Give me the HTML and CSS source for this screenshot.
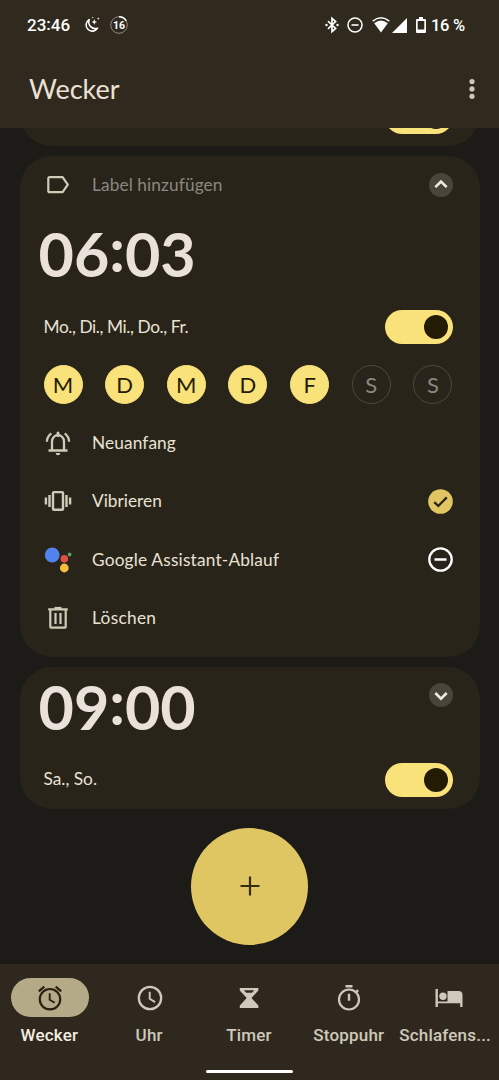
FILE: index.html
```
<!DOCTYPE html>
<html lang="de">
<head>
<meta charset="utf-8">
<title>Wecker</title>
<link rel="stylesheet" href="styles.css">
</head>
<body>
<div class="screen">
  <header class="top">
    <div class="status">
      <span class="clock">23<span class="clock-colon">:</span>46</span>
      <svg class="moon" width="18" height="18" viewBox="0 0 18 18"><path d="M6.200 3.600A6.200 6.200 0 1 0 14.600 12.200A6.600 6.600 0 0 1 6.200 3.600Z" fill="none" stroke="#fff" stroke-width="1.600" stroke-linejoin="round"/><path d="M11.300 3.200l.8 2 2 .8-2 .8-.8 2-.8-2-2-.8 2-.8zM15.200 1.300l.4 1 1 .4-1 .4-.4 1-.4-1-1-.4 1-.4zM9.800.4l.3.800.8.3-.8.3-.3.800-.3-.8-.8-.3.800-.3z" fill="#fff"/></svg>
      <svg class="ring" width="20" height="20" viewBox="0 0 20 20"><circle cx="10" cy="10" r="8.300" fill="none" stroke="#8d8982" stroke-width="1"/><path d="M10 1.700A8.300 8.300 0 0 1 17.200 5.800" fill="none" stroke="#fff" stroke-width="1.600"/><text x="10" y="13.900" class="ring-text">16</text></svg>
      <span class="spacer"></span>
      <svg class="bt" width="14" height="18" viewBox="0 0 14 18"><path d="M3 5.200L10.600 12.400L7 15.600V2.400L10.600 5.600L3 12.800" fill="none" stroke="#fff" stroke-width="1.700"/><circle cx="1.500" cy="9" r="1.200" fill="#fff"/><circle cx="12.500" cy="9" r="1.200" fill="#fff"/></svg>
      <svg class="dnd" width="16" height="16" viewBox="0 0 16 16"><circle cx="8" cy="8" r="7" fill="none" stroke="#fff" stroke-width="1.500"/><path d="M4.500 8h7" stroke="#fff" stroke-width="1.600"/></svg>
      <svg class="wifi" width="18" height="16" viewBox="0 0 18 16"><path d="M.7 4.200Q9-2.500 17.300 4.200" fill="none" stroke="#fff" stroke-width="1.500"/><path d="M2.200 6.200Q9 .8 15.800 6.200L9 15.600z" fill="#fff"/></svg>
      <svg class="signal" width="15" height="15" viewBox="0 0 15 15"><path d="M15 0v15H0z" fill="#fff"/></svg>
      <svg class="battery" width="10" height="16" viewBox="0 0 10 16"><path d="M3 0h4v2h2a1 1 0 0 1 1 1v12a1 1 0 0 1-1 1H1a1 1 0 0 1-1-1V3a1 1 0 0 1 1-1h2zM1.700 4v8.500h6.600V4z" fill="#fff" fill-rule="evenodd"/></svg>
      <span class="percent">16 %</span>
    </div>
    <div class="appbar">
      <h1 class="title">Wecker</h1>
      <svg width="6" height="22" viewBox="0 0 6 22" fill="#d0c8ba"><circle cx="3" cy="3.500" r="2.600"/><circle cx="3" cy="10.900" r="2.600"/><circle cx="3" cy="18.300" r="2.600"/></svg>
    </div>
  </header>

  <main class="list">
    <div class="clipped">
      <section class="card card-small"><div class="schedule"><span></span><span class="toggle"><i class="knob"></i></span></div></section>
    </div>

    <section class="card card-open">
      <div class="row">
        <span class="icon"><svg width="24" height="20" viewBox="0 0 24 20"><path d="M3.500 2.200H16.600L21.800 9.700L16.600 17.200H3.500a1.200 1.200 0 0 1-1.200-1.200V3.400A1.200 1.200 0 0 1 3.500 2.200Z" fill="none" stroke="#d0cbb7" stroke-width="2.200" stroke-linejoin="round"/></svg></span>
        <span class="label hint">Label hinzufügen</span>
        <span class="chevron"><svg width="24" height="24" viewBox="0 0 24 24"><path d="M6.300 14.200L12 8.500l5.700 5.700" class="chevron-line"/></svg></span>
      </div>
      <div class="time">06<span class="colon">:</span>03</div>
      <div class="schedule"><span class="days-text weekdays">Mo., Di., Mi., Do., Fr.</span><span class="toggle"><i class="knob"></i></span></div>
      <div class="days">
        <span class="day on">M</span><span class="day on">D</span><span class="day on">M</span><span class="day on">D</span><span class="day on">F</span><span class="day">S</span><span class="day">S</span>
      </div>
      <div class="row">
        <span class="icon"><svg width="28" height="28" viewBox="0 0 28 28" fill="none" stroke="#d0cbb7" stroke-width="2.300"><path d="M4.500 21.500h19M8 21.500V12.500a6 6.300 0 0 1 12 0v9"/><path d="M14 4v2.500" stroke-width="3" stroke-linecap="round"/><path d="M2.900 12.800C3 9 4.800 6.200 7.300 4.300M25.100 12.800C25 9 23.200 6.200 20.700 4.300"/><path d="M11.700 24h4.600a2.300 2.300 0 0 1-4.600 0z" fill="#d0cbb7" stroke="none"/></svg></span>
        <span class="label neu">Neuanfang</span>
      </div>
      <div class="row">
        <span class="icon"><svg width="28" height="24" viewBox="0 0 28 24" fill="none" stroke="#d0cbb7" stroke-width="2.400"><rect x="9" y="3.100" width="10" height="17.600" rx="1"/><path d="M5.500 6v12M22.500 6v12M1.900 8.500v7M26.100 8.500v7"/></svg></span>
        <span class="label vib">Vibrieren</span>
        <svg width="25" height="25" viewBox="0 0 25 25"><circle cx="12.500" cy="12.500" r="12.300" fill="#e0c662"/><path d="M6.300 13.200L10.300 17L18.800 8.400" fill="none" stroke="#28241a" stroke-width="2.300"/></svg>
      </div>
      <div class="row">
        <span class="icon"><svg width="28" height="26" viewBox="0 0 28 26"><circle cx="8.200" cy="8" r="7.400" fill="#5083ec"/><circle cx="20.300" cy="11.800" r="3.800" fill="#dc5143"/><circle cx="20.300" cy="21" r="4.400" fill="#f4bd40"/><circle cx="25.600" cy="7.500" r="1.900" fill="#58a55c"/></svg></span>
        <span class="label assist">Google Assistant-Ablauf</span>
        <svg width="25" height="25" viewBox="0 0 25 25" fill="none" stroke="#fff"><circle cx="12.500" cy="12.500" r="11.200" stroke-width="2.300"/><path d="M6.500 12.500h12" stroke-width="2.500"/></svg>
      </div>
      <div class="row">
        <span class="icon"><svg width="22" height="24" viewBox="0 0 22 24" fill="none" stroke="#d0cbb7" stroke-width="2.200"><path d="M3.300 3.500V20.200a1.500 1.500 0 0 0 1.500 1.500H17.200a1.500 1.500 0 0 0 1.500-1.500V3.500M1.200 3.400H20.800M8.500 7v11M13.500 7v11"/><path d="M7.500 2h7"/></svg></span>
        <span class="label del">Löschen</span>
      </div>
    </section>

    <section class="card card-small">
      <div class="small-head">
        <div class="time">09<span class="colon">:</span>00</div>
        <span class="chevron"><svg width="24" height="24" viewBox="0 0 24 24"><path d="M6.300 10L12 15.700l5.700-5.700" class="chevron-line"/></svg></span>
      </div>
      <div class="schedule"><span class="days-text weekend">Sa., So.</span><span class="toggle"><i class="knob"></i></span></div>
    </section>

    <button class="fab" aria-label="Wecker hinzufügen"><svg width="20" height="20" viewBox="0 0 20 20"><path d="M10 .5v19M.5 10h19" stroke="#352d12" stroke-width="2.200"/></svg></button>
  </main>

  <nav class="nav">
    <div class="tab active"><span class="pill"><svg width="26" height="26" viewBox="0 0 26 26" fill="none" stroke="#272110" stroke-width="2.200"><circle cx="13" cy="14.200" r="10.200"/><path d="M12.700 8.200v6.600l5 3" stroke-width="1.900"/><path d="M1.800 6.300L7.300 1.700M24.200 6.300L18.700 1.700" stroke-width="2.300"/></svg></span><span class="tab-text">Wecker</span></div>
    <div class="tab"><span class="pill"><svg width="26" height="26" viewBox="0 0 26 26" fill="none" stroke="#d0c8ba" stroke-width="2.300"><circle cx="13" cy="13" r="11.200"/><path d="M12.700 6.800v7l5.400 3.300" stroke-width="1.900"/></svg></span><span class="tab-text">Uhr</span></div>
    <div class="tab"><span class="pill"><svg width="20" height="20" viewBox="0 0 20 20"><path d="M.8 0h18.600v2.500L12.500 10l6.900 7.500V20H.8v-2.500L7.700 10 .8 2.500zM5 2.200L7.200 4.800h5.800l2.200-2.600z" fill="#d0c8ba" fill-rule="evenodd"/></svg></span><span class="tab-text">Timer</span></div>
    <div class="tab"><span class="pill"><svg width="26" height="28" viewBox="0 0 26 28" fill="none" stroke="#d0c8ba" stroke-width="2.200"><circle cx="13" cy="15.500" r="10"/><path d="M9.500 2.200h7M13 9.700v7" stroke-width="2.400"/><path d="M19.500 8.800l2.600-2.600" stroke-width="2.400"/></svg></span><span class="tab-text">Stoppuhr</span></div>
    <div class="tab"><span class="pill"><svg width="28" height="20" viewBox="0 0 28 20" fill="#d0c8ba"><path d="M.5 1h2.400v12.400h9.600V3H23.500a4 4 0 0 1 4 4V19H25.200v-3.700H2.900V19H.5z"/><circle cx="8" cy="8.300" r="3.700"/></svg></span><span class="tab-text bedtime">Schlafens...</span></div>
    <span class="home-bar"></span>
  </nav>
</div>
</body>
</html>
```
FILE: styles.css
```
* { box-sizing: border-box; }
body { margin: 0; background: #1d1b17; font-family: Lato, "Open Sans", sans-serif; color: #e9e2d3; }
svg { display: block; flex: none; }
.screen { width: 499px; height: 1080px; display: flex; flex-direction: column; overflow: hidden; }

.top { height: 128px; flex: none; background: #30291e; }
.status { height: 50px; padding: 0 34px 0 27px; display: flex; align-items: center; color: #fff; font-family: Roboto, sans-serif; font-size: 17px; font-weight: 500; white-space: nowrap; }
.clock { width: 56px; }
.clock-colon { position: relative; top: -1px; }
.moon { margin-right: 8px; }
.ring-text { font-size: 10.500px; font-weight: 700; fill: #fff; text-anchor: middle; }
.spacer { flex: 1; }
.bt { margin-right: 8px; }
.dnd { margin-right: 9px; }
.wifi { margin-right: 2px; }
.signal { margin-right: 9px; }
.battery { margin-right: 5px; }
.percent { width: 34px; font-size: 16.500px; letter-spacing: -.3px; }
.appbar { height: 78px; padding: 0 24px 0 29px; display: flex; align-items: center; justify-content: space-between; }
.title { margin: 0; font-size: 27px; font-weight: 400; line-height: 78px; color: #ece1d4; }

.list { flex: 1; padding: 0 19px 0 19.500px; display: flex; flex-direction: column; }
.clipped { height: 18px; flex: none; margin-bottom: 10px; display: flex; align-items: flex-end; overflow: hidden; }
.card { width: 100%; flex: none; background: #28241a; border-radius: 32px; padding: 0 27px 0 24px; }
.card-open { height: 500.500px; margin-bottom: 10px; }
.card-small { height: 142px; padding-bottom: 12px; display: flex; flex-direction: column; justify-content: space-between; }
.clipped .card-small { justify-content: flex-end; }
.row { height: 58.200px; display: flex; align-items: center; }
.icon { width: 28px; margin-right: 20.500px; display: flex; justify-content: center; }
.label { flex: 1; font-size: 17.300px; line-height: 24px; white-space: nowrap; }
.hint { color: #8b8880; letter-spacing: .1px; }
.neu { letter-spacing: .1px; }
.assist { letter-spacing: .18px; }
.del { letter-spacing: .3px; }
.time { height: 83.500px; margin-left: -5px; font-size: 61px; line-height: 80px; font-weight: 700; color: #e9e1da; white-space: nowrap; }
.colon { position: relative; top: -5px; }
.schedule { height: 58px; display: flex; align-items: center; justify-content: space-between; }
.card-small .schedule { height: 34px; }
.days-text { font-size: 17.300px; white-space: nowrap; }
.weekdays { letter-spacing: -.4px; }
.weekend { line-height: 22px; padding-bottom: 1px; }
.toggle { width: 68px; height: 34px; padding: 5px; border-radius: 17px; background: #fae27b; display: flex; justify-content: flex-end; }
.knob { width: 24px; height: 24px; border-radius: 50%; background: #231b04; }
.days { height: 57.900px; margin-bottom: .600px; padding-right: .5px; display: flex; align-items: center; justify-content: space-between; }
.day { width: 39px; height: 39px; border: 1px solid #4d493e; border-radius: 50%; display: flex; align-items: center; justify-content: center; font-size: 22px; color: #8b8880; }
.day.on { border-color: #fae27b; background: #fae27b; color: #231b04; }
.small-head { display: flex; justify-content: space-between; }
.small-head .chevron { margin-top: 16.500px; }
.chevron { width: 24px; height: 24px; border-radius: 50%; background: #49453a; }
.chevron-line { fill: none; stroke: #f2ebdc; stroke-width: 2.500; }
.fab { width: 117px; height: 117px; margin: 19px auto 0; padding: 0; border: 0; border-radius: 50%; background: #e0c662; display: flex; align-items: center; justify-content: center; }

.nav { position: relative; height: 116px; flex: none; padding-top: 14px; background: #2e281e; display: grid; grid-template-columns: repeat(5, 1fr); }
.tab { min-width: 0; display: flex; flex-direction: column; align-items: center; color: #d0c8ba; }
.pill { width: 78px; height: 39px; border-radius: 20px; display: flex; align-items: center; justify-content: center; }
.active { color: #f5eee0; }
.active .pill { background: #b5aa87; }
.tab-text { margin-top: 6px; padding-right: 1px; font-family: Roboto, sans-serif; font-size: 17px; line-height: 24px; font-weight: 500; letter-spacing: .2px; white-space: nowrap; }
.bedtime { padding-right: 8px; }
.home-bar { position: absolute; left: 206px; bottom: 7px; width: 87px; height: 3px; border-radius: 2px; background: #fff; }
```
